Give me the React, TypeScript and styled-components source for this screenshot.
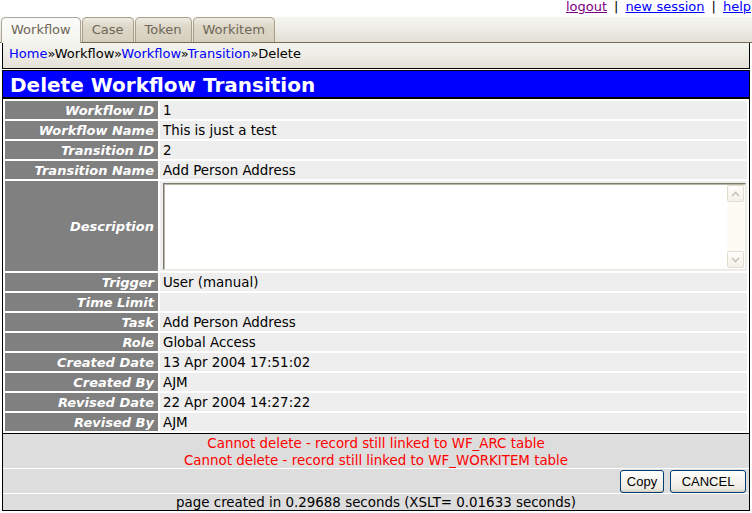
import { Fragment } from 'react'
import styled, { createGlobalStyle } from 'styled-components'

const GlobalStyle = createGlobalStyle`
  *, *::before, *::after {
    box-sizing: border-box;
  }
  html, body {
    margin: 0;
    padding: 0;
    background: #fff;
  }
  body {
    font-family: 'DejaVu Sans', Verdana, sans-serif;
    font-size: 13.4px;
    color: #000;
  }
`

const TopLinks = styled.div`
  height: 17px;
  font-size: 13px;
  line-height: 14px;
  text-align: right;
  padding-right: 1px;
`

const NavLink = styled.a<{ $visited?: boolean }>`
  color: ${(p) => (p.$visited ? '#800080' : '#0000ff')};
  text-decoration: underline;
  cursor: pointer;
`

const Sep = styled.span`
  padding: 0 7px;
`

const TabBar = styled.div`
  display: flex;
  align-items: flex-end;
  gap: 1px;
  height: 26px;
  padding-left: 1px;
  background: linear-gradient(#f5f5f1, #eeede6 45%, #e6e3da 80%, #e2dfd5);
  border-bottom: 1px solid #7b6a55;
`

const Tab = styled.div<{ $active?: boolean }>`
  height: ${(p) => (p.$active ? 26 : 25)}px;
  margin-bottom: ${(p) => (p.$active ? -1 : 0)}px;
  padding: 0 9px;
  font-size: 13px;
  line-height: 24px;
  color: #6e6657;
  border: 1px solid ${(p) => (p.$active ? '#aaa596' : '#a89f89')};
  border-bottom: none;
  border-radius: 5px 5px 0 0;
  background: ${(p) =>
    p.$active
      ? 'linear-gradient(#fbfbf9, #f7f7f3 60%, #f4f4ef)'
      : 'linear-gradient(#efebe1, #ded8c9 35%, #d6cfbd)'};
`

const Crumbs = styled.div`
  margin: 0 2px 1px;
  height: 26px;
  font-size: 13px;
  line-height: 22px;
  padding-left: 6px;
  border: 1px solid #000;
  border-top: none;
  background: linear-gradient(#f4f4ef, #eeede6 45%, #e7e4db 80%, #e4e1d8);
`

const CrumbLink = styled.a`
  color: #0000ff;
  text-decoration: none;
`

const Panel = styled.div`
  margin: 0 2px;
  border: 1px solid #000;
`

const Title = styled.h1`
  margin: 0;
  height: 28px;
  padding: 2px 0 0 7px;
  line-height: 24px;
  font-size: 20px;
  font-weight: bold;
  color: #fff;
  background: #0000ff;
  border-bottom: 2px solid #000;
`

const Grid = styled.div`
  display: grid;
  grid-template-columns: 153px 1fr;
  gap: 2px;
  padding: 2px;
  background: #fff;
`

const Label = styled.div`
  display: flex;
  align-items: center;
  justify-content: flex-end;
  min-height: 18px;
  padding: 2px 4px 0 0;
  line-height: 16px;
  font-size: 13px;
  background: #808080;
  color: #fff;
  font-weight: bold;
  font-style: italic;
`

const Value = styled.div`
  min-height: 18px;
  padding: 2px 0 0 3px;
  line-height: 16px;
  background: #eeeeee;
`

const MemoCell = styled.div`
  background: #eeeeee;
  padding: 2px 1px 1px 3px;
`

const Memo = styled.div`
  display: flex;
  height: 87px;
  border: 1px solid;
  border-color: #7d796c #ebe9de #ebe9de #7d796c;
  box-shadow: inset 1px 1px 0 #b9b5a8;
  background: #fff;
`

const MemoInput = styled.textarea`
  flex: 1;
  margin: 0;
  padding: 2px 3px;
  border: none;
  outline: none;
  resize: none;
  background: transparent;
  font: inherit;
`

const ScrollTrack = styled.div`
  display: flex;
  flex-direction: column;
  justify-content: space-between;
  width: 17px;
  margin: 1px 1px 1px 0;
  background: #fcfcf4;
`

const ScrollButton = styled.div`
  display: flex;
  align-items: center;
  justify-content: center;
  height: 17px;
  border: 1px solid #e1ded1;
  border-radius: 2px;
  background: linear-gradient(#fdfdfa, #f3f1e9);
`

const Bottom = styled.div`
  border-top: 1px solid #000;
  background: #dddddd;
`

const Messages = styled.div`
  height: 35px;
  padding-top: 1px;
  line-height: 17px;
  text-align: center;
  color: #ff0000;
  border-bottom: 1px solid #fff;
`

const Actions = styled.div`
  display: flex;
  justify-content: flex-end;
  gap: 6px;
  height: 25px;
  padding: 1px 3px 0 0;
  border-bottom: 1px solid #fff;
`

const Button = styled.button<{ $width: number }>`
  width: ${(p) => p.$width}px;
  height: 23px;
  padding: 0;
  font: 13px 'Liberation Sans', Arial, sans-serif;
  color: #000;
  border: 1px solid #003c74;
  border-radius: 3px;
  background: linear-gradient(#ffffff, #f6f5f0 40%, #ebe9e1 85%, #d8d2c3);
  box-shadow: inset 0 -1px 0 #d6d0c0;
`

const Timing = styled.div`
  height: 16px;
  padding-top: 1px;
  line-height: 15px;
  text-align: center;
`

const Chevron = ({ up }: { up?: boolean }) => (
  <svg width="9" height="6" viewBox="0 0 9 6">
    <polyline
      points={up ? '1,5 4.5,1.5 8,5' : '1,1 4.5,4.5 8,1'}
      fill="none"
      stroke="#c8c5b4"
      strokeWidth="1.6"
    />
  </svg>
)

const topRows = [
  ['Workflow ID', '1'],
  ['Workflow Name', 'This is just a test'],
  ['Transition ID', '2'],
  ['Transition Name', 'Add Person Address'],
]

const bottomRows = [
  ['Trigger', 'User (manual)'],
  ['Time Limit', ''],
  ['Task', 'Add Person Address'],
  ['Role', 'Global Access'],
  ['Created Date', '13 Apr 2004 17:51:02'],
  ['Created By', 'AJM'],
  ['Revised Date', '22 Apr 2004 14:27:22'],
  ['Revised By', 'AJM'],
]

const tabs = ['Workflow', 'Case', 'Token', 'Workitem']

const App = () => {
  return (
    <>
      <GlobalStyle />
      <TopLinks>
        <NavLink $visited>logout</NavLink>
        <Sep>|</Sep>
        <NavLink>new session</NavLink>
        <Sep>|</Sep>
        <NavLink>help</NavLink>
      </TopLinks>

      <TabBar>
        {tabs.map((t, i) => (
          <Tab key={t} $active={i === 0}>
            {t}
          </Tab>
        ))}
      </TabBar>

      <Crumbs>
        <CrumbLink>Home</CrumbLink>»Workflow»<CrumbLink>Workflow</CrumbLink>»
        <CrumbLink>Transition</CrumbLink>»Delete
      </Crumbs>

      <Panel>
        <Title>Delete Workflow Transition</Title>
        <Grid>
          {topRows.map(([k, v]) => (
            <Fragment key={k}>
              <Label>{k}</Label>
              <Value>{v}</Value>
            </Fragment>
          ))}
          <Label>Description</Label>
          <MemoCell>
            <Memo>
              <MemoInput readOnly />
              <ScrollTrack>
                <ScrollButton>
                  <Chevron up />
                </ScrollButton>
                <ScrollButton>
                  <Chevron />
                </ScrollButton>
              </ScrollTrack>
            </Memo>
          </MemoCell>
          {bottomRows.map(([k, v]) => (
            <Fragment key={k}>
              <Label>{k}</Label>
              <Value>{v}</Value>
            </Fragment>
          ))}
        </Grid>
        <Bottom>
          <Messages>
            Cannot delete - record still linked to WF_ARC table
            <br />
            Cannot delete - record still linked to WF_WORKITEM table
          </Messages>
          <Actions>
            <Button $width={44}>Copy</Button>
            <Button $width={76}>CANCEL</Button>
          </Actions>
          <Timing>page created in 0.29688 seconds (XSLT= 0.01633 seconds)</Timing>
        </Bottom>
      </Panel>
    </>
  )
}

export default App
